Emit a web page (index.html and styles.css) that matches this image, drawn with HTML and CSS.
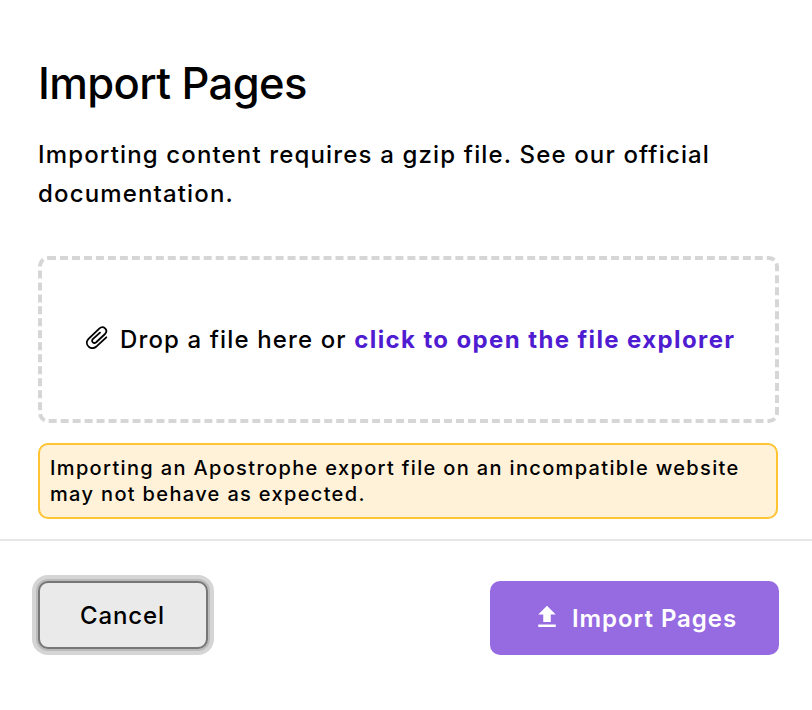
FILE: index.html
```html
<!DOCTYPE html>
<html lang="en">
<head>
<meta charset="utf-8">
<title>Import Pages</title>
<link rel="stylesheet" href="styles.css">
</head>
<body>
<main class="modal">
  <section class="content">
    <h1 class="title">Import Pages</h1>
    <p class="description">Importing content requires a gzip file. See our official<br>documentation.</p>
    <div class="dropzone">
      <svg class="clip" viewBox="0 0 24 24"><path d="M21.3 12.3 11.8 21.2C5.8 26.2-1.2 19.6 3.3 14.2L14.2 3.6C18.4-.1 23.7 4.8 20 9L11.2 17.2C8.8 19.2 5.7 16.6 7.8 14.2L15 7.7"/></svg>
      <span class="drop-text">Drop a file here or</span>
      <a class="browse">click to open the file explorer</a>
    </div>
    <p class="warning">Importing an Apostrophe export file on an incompatible website<br>may not behave as expected.</p>
  </section>
  <footer class="footer">
    <button class="button cancel">Cancel</button>
    <button class="button import"><svg class="upload" viewBox="0 0 24 24"><path d="M9 16V10H5L12 3L19 10H15V16H9M5 20V18H19V20H5Z"/></svg><span>Import Pages</span></button>
  </footer>
</main>
</body>
</html>
```
FILE: styles.css
```css
* { box-sizing: border-box; }
body { margin: 0; background: #fff; color: #000; font-family: Inter, sans-serif; font-weight: 500; }
.modal { height: 710px; overflow: hidden; }
.content { height: 541px; padding: 55px 34px 0 38px; border-bottom: 2px solid #e6e6e6; }
.title { margin: 0; font-size: 43.5px; line-height: 56px; font-weight: 550; letter-spacing: -.6px; white-space: nowrap; }
.description { margin: 24px 0 0; font-size: 24px; line-height: 39px; letter-spacing: 1.15px; white-space: nowrap; }
.dropzone { display: flex; align-items: center; width: 741px; height: 167px; margin-top: 43px; padding-left: 43px; border: 4px dashed #d6d6d6; border-radius: 10px; font-size: 24px; letter-spacing: 1.13px; white-space: nowrap; }
.clip { width: 24px; height: 24px; margin-right: 11px; fill: none; stroke: #000; stroke-width: 1.8; stroke-linecap: round; position: relative; top: -3px; }
.browse { margin-left: 7.5px; color: #4f1cd2; font-weight: 700; letter-spacing: 1.38px; }
.warning { width: 740px; height: 76px; margin: 20px 0 0; padding: 10px; border: 2px solid #ffc431; border-radius: 10px; background: #fff2d8; font-size: 20px; line-height: 26px; letter-spacing: 1.34px; white-space: nowrap; }
.footer { display: flex; justify-content: space-between; align-items: flex-start; padding: 40px 33px 0 38px; }
.button { font: 500 24px Inter, sans-serif; letter-spacing: 1px; border-radius: 10px; }
.cancel { width: 170px; height: 68px; padding: 0 2px 0 1px; border: 2px solid #777; background: #eaeaea; color: #000; box-shadow: 0 0 0 2px #bbb, 0 0 0 6px #d5d5d5; letter-spacing: .9px; }
.import { display: flex; align-items: center; justify-content: center; width: 289px; height: 74px; border: 0; background: #966be2; color: #fff; font-weight: 600; letter-spacing: .95px; }
.upload { width: 30px; height: 30px; margin: 0 10px 2px 0; fill: #fff; }
```
